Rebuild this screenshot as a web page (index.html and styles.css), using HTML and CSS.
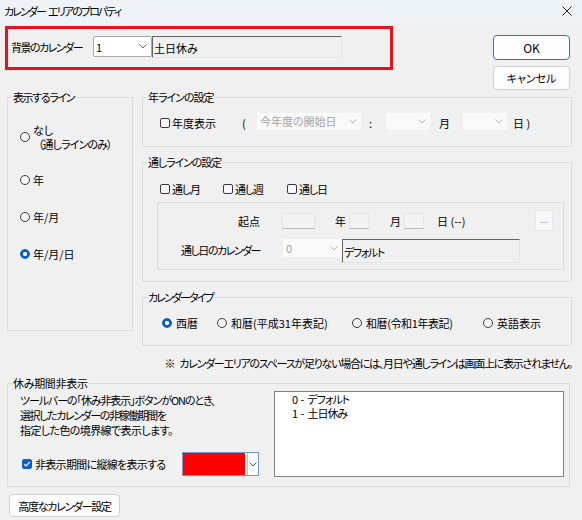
FILE: index.html
```html
<!DOCTYPE html>
<html lang="ja">
<head>
<meta charset="utf-8">
<title>カレンダー エリアのプロパティ</title>
<link rel="stylesheet" href="styles.css">
</head>
<body>
<div class="window">
  <div class="titlebar">
    <span class="title"><span>カレンダー</span> <span>エリアのプロパティ</span></span>
    <svg class="close" width="10" height="10" viewBox="0 0 10 10"><path d="M0.5 0.5L9.5 9.5M9.5 0.5L0.5 9.5" stroke="#1f1f1f" stroke-width="1" fill="none"/></svg>
  </div>

  <div class="top">
    <div class="bgcal">
      <span class="bgcal-label">背景のカレンダー</span>
      <div class="combo combo-bg"><span>1</span><svg class="chev" width="8" height="5" viewBox="0 0 8 5"><path d="M0.5 0.5L4 4L7.5 0.5" fill="none" stroke="currentColor"/></svg></div>
      <div class="sunken sunken-bg">土日休み</div>
    </div>
    <div class="btns">
      <div class="btn btn-ok">OK</div>
      <div class="btn btn-cancel">キャンセル</div>
    </div>
  </div>

  <div class="middle">
    <div class="group g-lines">
      <span class="legend lg-lines">表示するライン</span>
      <div class="radio-list">
        <div class="ritem ritem-1"><span class="radio"></span><span class="rtext"><span class="l1">なし</span><span class="sub">（通しラインのみ）</span></span></div>
        <div class="ritem ritem-2"><span class="radio"></span><span class="rtext">年</span></div>
        <div class="ritem ritem-3"><span class="radio"></span><span class="rtext">年/月</span></div>
        <div class="ritem ritem-4"><span class="radio on"></span><span class="rtext">年/月/日</span></div>
      </div>
    </div>

    <div class="rightcol">
      <div class="group g-year">
        <span class="legend lg-year">年ラインの設定</span>
        <div class="yrow">
          <div class="chk-item y-chk"><span class="chk"></span><span>年度表示</span></div>
          <span class="paren">(</span>
          <div class="dd dd1"><span>今年度の開始日</span><svg class="chev" width="8" height="5" viewBox="0 0 8 5"><path d="M0.5 0.5L4 4L7.5 0.5" fill="none" stroke="currentColor"/></svg></div>
          <span class="colon">:</span>
          <div class="dd dd2"><span></span><svg class="chev" width="8" height="5" viewBox="0 0 8 5"><path d="M0.5 0.5L4 4L7.5 0.5" fill="none" stroke="currentColor"/></svg></div>
          <span class="mon">月</span>
          <div class="dd dd3"><span></span><svg class="chev" width="8" height="5" viewBox="0 0 8 5"><path d="M0.5 0.5L4 4L7.5 0.5" fill="none" stroke="currentColor"/></svg></div>
          <span class="day">日 )</span>
        </div>
      </div>

      <div class="group g-through">
        <span class="legend lg-through">通しラインの設定</span>
        <div class="trow">
          <div class="chk-item t1"><span class="chk"></span><span class="tl">通し月</span></div>
          <div class="chk-item t2"><span class="chk"></span><span class="tl">通し週</span></div>
          <div class="chk-item t3"><span class="chk"></span><span class="tl">通し日</span></div>
        </div>
        <div class="inner">
          <div class="irow irow-1">
            <span class="lbl">起点</span>
            <span class="tb tb-y"></span>
            <span class="unit unit-y">年</span>
            <span class="tb tb-s"></span>
            <span class="unit unit-m">月</span>
            <span class="tb tb-s"></span>
            <span class="unit unit-d">日 (--)</span>
            <span class="dots">...</span>
          </div>
          <div class="irow irow-2">
            <span class="lbl lbl-2">通し日のカレンダー</span>
            <div class="dd dd-cal"><span>0</span><svg class="chev" width="8" height="5" viewBox="0 0 8 5"><path d="M0.5 0.5L4 4L7.5 0.5" fill="none" stroke="currentColor"/></svg></div>
            <div class="sunken sunken-cal">デフォルト</div>
          </div>
        </div>
      </div>

      <div class="group g-type">
        <span class="legend lg-type">カレンダータイプ</span>
        <div class="typerow">
          <div class="titem ti1"><span class="radio on"></span><span>西暦</span></div>
          <div class="titem ti2"><span class="radio"></span><span>和暦(平成31年表記)</span></div>
          <div class="titem ti3"><span class="radio"></span><span class="tt3">和暦(令和1年表記)</span></div>
          <div class="titem ti4"><span class="radio"></span><span>英語表示</span></div>
        </div>
      </div>
    </div>
  </div>

  <div class="note"><span class="mark">※</span>カレンダーエリアのスペースが足りない場合には、月日や通しラインは画面上に表示されません。</div>

  <div class="group g-holiday">
    <span class="legend lg-holiday">休み期間非表示</span>
    <div class="hbody">
      <div class="hleft">
        <p class="desc"><span class="d1">ツールバーの「休み非表示」ボタンがONのとき、</span><span class="d2">選択したカレンダーの非稼働期間を</span><span class="d3">指定した色の境界線で表示します。</span></p>
        <div class="hrow">
          <div class="chk-item h-chk"><span class="chk on"><svg width="8" height="8" viewBox="0 0 8 8"><path d="M1.2 4.2L3.2 6L6.8 1.8" fill="none" stroke="#fff" stroke-width="1.2"/></svg></span><span class="hl">非表示期間に縦線を表示する</span></div>
          <div class="colorcombo"><span class="swatch"></span><span class="cc-btn"><svg class="chev" width="8" height="5" viewBox="0 0 8 5"><path d="M0.5 0.5L4 4L7.5 0.5" fill="none" stroke="currentColor"/></svg></span></div>
        </div>
      </div>
      <div class="listbox">
        <div class="li"><span>0 -</span><span class="lk">デフォルト</span></div>
        <div class="li"><span>1 -</span><span class="lk">土日休み</span></div>
      </div>
    </div>
  </div>

  <div class="btn btn-adv">高度なカレンダー設定</div>
</div>
</body>
</html>
```

FILE: styles.css
```css
* { box-sizing: border-box; }
html, body { margin: 0; padding: 0; }
body {
  width: 582px;
  height: 520px;
  overflow: hidden;
  background: #f0f0f0;
  font-family: "Noto Sans CJK JP", "Noto Sans", sans-serif;
  font-size: 11px;
  font-feature-settings: "palt";
  color: #000;
  line-height: 14px;
}
.window { width: 582px; height: 520px; }

/* title bar */
.titlebar {
  height: 24px;
  background: #eef3f8;
  display: flex;
  align-items: center;
  justify-content: space-between;
  padding: 0 10px 2px 4px;
}
.title { display: flex; gap: 3px; letter-spacing: -1.9px; white-space: nowrap; }
.close { display: block; }

/* top area */
.top { display: flex; height: 73px; }
.bgcal {
  margin: 2px 0 0 5px;
  width: 388px;
  height: 44px;
  border: 3px solid #e3141b;
  display: flex;
  align-items: flex-start;
  padding: 7px 0 0 3px;
}
.bgcal-label { width: 82px; margin-top: 4px; white-space: nowrap; letter-spacing: -1.5px; }
.combo {
  display: flex;
  align-items: center;
  justify-content: space-between;
  background: #fff;
  border: 1px solid #a9a9a9;
  border-radius: 2px;
  color: #606060;
}
.combo span { color: #000; }
.combo-bg { width: 59px; height: 21px; padding: 0 4px 0 2px; }
.chev { display: block; }
.sunken {
  background: #f0f0f0;
  border-top: 1px solid #646464;
  border-left: 1px solid #646464;
  border-right: 1px solid #e3e3e3;
  border-bottom: 1px solid #e3e3e3;
  padding-left: 1px;
  white-space: nowrap;
}
.sunken-bg { width: 190px; height: 22px; line-height: 22px; }

.btns {
  margin: 11px 12px 0 auto;
  display: flex;
  flex-direction: column;
  gap: 6px;
}
.btn {
  background: #fdfdfd;
  border: 1px solid #d0d0d0;
  border-radius: 4px;
  display: flex;
  align-items: center;
  justify-content: center;
  white-space: nowrap;
}
.btn-ok { width: 77px; height: 25px; border-color: #3b6fc6; font-size: 12px; }
.btn-cancel { width: 77px; height: 24px; }

/* groups */
.group { border: 1px solid #dcdcdc; }
.legend {
  display: block;
  width: max-content;
  margin: -8px 0 0 4px;
  padding: 0 1px;
  background: #f0f0f0;
  line-height: 14px;
  white-space: nowrap;
}
.lg-lines { letter-spacing: -1.4px; }
.lg-year { letter-spacing: -1px; }
.lg-through { letter-spacing: -1.1px; }
.lg-type { letter-spacing: -1.9px; }
.lg-holiday { letter-spacing: -0.3px; }

.middle { display: flex; align-items: flex-start; height: 249px; }
.g-lines { margin-left: 7px; width: 126px; height: 234px; }
.radio-list { display: flex; flex-direction: column; padding-left: 12px; }
.ritem { display: flex; align-items: center; gap: 3px; white-space: nowrap; }
.ritem-1 { margin-top: 19px; }
.ritem-2 { margin-top: 22px; }
.ritem-3, .ritem-4 { margin-top: 23px; }
.rtext { display: flex; flex-direction: column; }
.sub { padding-left: 5px; letter-spacing: -0.9px; }

.radio {
  flex: 0 0 10px;
  width: 10px;
  height: 10px;
  border: 1px solid #3a3a3a;
  border-radius: 50%;
  background: #f7f7f7;
}
.radio.on {
  border-color: #0a5fc0;
  background: radial-gradient(circle, #fff 0 1.8px, #0a5fc0 2.4px);
}
.chk {
  flex: 0 0 10px;
  width: 10px;
  height: 10px;
  border: 1px solid #3a3a3a;
  border-radius: 2px;
  background: #f7f7f7;
  display: flex;
  align-items: center;
  justify-content: center;
}
.chk.on { background: #0a5fc0; border-color: #0a5fc0; }
.chk svg { display: block; }
.chk-item { display: flex; align-items: center; gap: 2px; white-space: nowrap; }

.rightcol { margin-left: 9px; width: 430px; display: flex; flex-direction: column; }

/* year line */
.g-year { height: 50px; }
.yrow {
  display: flex;
  align-items: center;
  height: 22px;
  margin-top: 8px;
  padding-left: 17px;
  white-space: nowrap;
}
.y-chk { width: 82px; }
.paren { width: 15px; }
.dd {
  display: flex;
  align-items: center;
  justify-content: space-between;
  background: #f9f9f9;
  color: #a3a3a3;
  height: 17px;
  padding: 0 4px 0 3px;
  white-space: nowrap;
}
.dd .chev { color: #b5b5b5; }
.yrow .dd { margin-bottom: 4px; }
.dd1 { width: 104px; }
.dd2, .dd3 { width: 44px; }
.colon { width: 25px; padding-left: 8px; }
.mon { width: 33px; padding-left: 9px; }
.day { padding-left: 6px; }

/* through line */
.g-through { margin-top: 15px; height: 120px; }
.trow { display: flex; margin-top: 13px; padding-left: 17px; }
.tl { letter-spacing: -1.2px; }
.t1 { width: 63px; }
.t2 { width: 64px; }
.inner {
  margin: 6px 0 0 14px;
  width: 407px;
  height: 68px;
  border: 1px solid #dcdcdc;
  padding-top: 7px;
}
.irow { display: flex; white-space: nowrap; }
.irow-1 { align-items: center; height: 21px; }
.irow-2 { align-items: flex-start; margin-top: 8px; }
.lbl { width: 102px; text-align: right; }
.lbl-2 { margin-top: 4px; letter-spacing: -1.5px; }
.tb {
  height: 16px;
  background: #f3f3f3;
  border: 1px solid #e6e6e6;
  border-bottom-color: #b9b9b9;
}
.tb-y { width: 33px; margin-left: 22px; }
.tb-s { width: 20px; }
.unit-y { width: 34px; padding-left: 20px; }
.unit-m { width: 35px; padding-left: 21px; }
.unit-d { width: 111px; padding-left: 13px; }
.dots {
  width: 18px;
  height: 21px;
  background: #f9f9f9;
  border: 1px solid #e9e9e9;
  border-radius: 3px;
  color: #8a8a8a;
  font-size: 9px;
  display: flex;
  align-items: center;
  justify-content: center;
  padding-bottom: 2px;
}
.dd-cal { width: 59px; height: 18px; margin-left: 23px; }
.sunken-cal { width: 178px; height: 24px; line-height: 25px; padding-left: 1px; letter-spacing: -1.4px; }

/* calendar type */
.g-type { margin-top: 15px; height: 49px; }
.typerow { display: flex; margin-top: 12px; padding-left: 19px; white-space: nowrap; }
.titem { display: flex; align-items: center; gap: 4px; }
.ti1 { width: 55px; }
.ti2 { width: 135px; }
.ti3 { width: 131px; }
.tt3 { letter-spacing: -0.4px; }

/* note */
.note { margin-top: 10px; text-align: right; padding-right: 10px; letter-spacing: -1.25px; white-space: nowrap; }
.mark { margin-right: 5px; }

/* holiday */
.g-holiday { margin: 13px 0 0 7px; width: 563px; height: 104px; }
.hbody { display: flex; align-items: flex-start; }
.hleft { width: 266px; padding-left: 12px; }
.desc { margin: 3px 0 0; line-height: 15px; display: flex; flex-direction: column; align-items: flex-start; white-space: nowrap; }
.d1 { letter-spacing: -1.1px; }
.d2 { letter-spacing: -1.4px; }
.d3 { letter-spacing: -0.6px; }
.hrow { display: flex; align-items: center; margin-top: 14px; height: 24px; padding-left: 2px; }
.h-chk { width: 160px; gap: 3px; }
.hl { letter-spacing: -0.7px; }
.colorcombo {
  display: flex;
  width: 77px;
  height: 24px;
  border: 1px solid #6f98d8;
  background: #fff;
}
.swatch { width: 62px; background: #ff0000; }
.cc-btn {
  flex: 1;
  margin-left: 2px;
  border-left: 1px solid #c4c4c4;
  display: flex;
  align-items: center;
  justify-content: center;
  color: #555;
}
.listbox {
  margin-top: 1px;
  width: 290px;
  height: 86px;
  background: #fff;
  border: 1px solid #828282;
  padding: 0 0 0 17px;
  line-height: 14px;
  white-space: nowrap;
}
.li { display: flex; gap: 3px; height: 14px; }
.lk { letter-spacing: -1px; }

.btn-adv { margin: 7px 0 0 9px; width: 111px; height: 23px; letter-spacing: -1.3px; }
```
